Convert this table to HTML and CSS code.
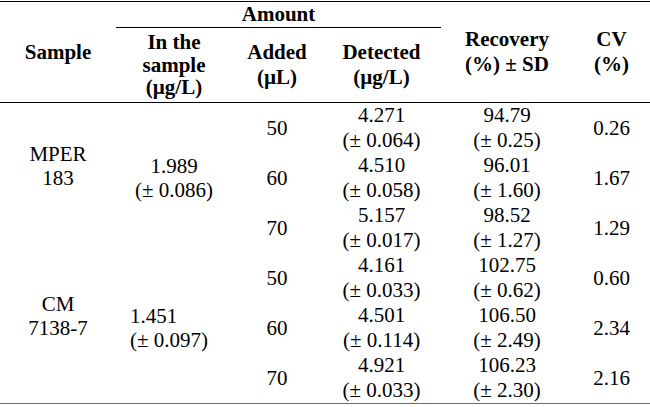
FILE: index.html
```html
<!DOCTYPE html>
<html>
<head>
<meta charset="utf-8">
<link rel="stylesheet" href="styles.css">
</head>
<body>
<table class="results">
  <colgroup>
    <col class="c-sample">
    <col class="c-insample">
    <col class="c-added">
    <col class="c-detected">
    <col class="c-recovery">
    <col class="c-cv">
  </colgroup>
  <thead>
    <tr class="head-top">
      <th rowspan="2" class="hb">Sample</th>
      <th colspan="3" class="amount">Amount</th>
      <th rowspan="2" class="hb">Recovery<br>(%) ± SD</th>
      <th rowspan="2" class="hb">CV<br>(%)</th>
    </tr>
    <tr class="head-sub">
      <th class="hb tight">In the<br>sample<br>(µg/L)</th>
      <th class="hb">Added<br>(µL)</th>
      <th class="hb">Detected<br>(µg/L)</th>
    </tr>
  </thead>
  <tbody>
    <tr>
      <td rowspan="3" class="sample">MPER<br>183</td>
      <td rowspan="3" class="base">1.989<br>(± 0.086)</td>
      <td>50</td>
      <td>4.271<br>(± 0.064)</td>
      <td>94.79<br>(± 0.25)</td>
      <td>0.26</td>
    </tr>
    <tr>
      <td>60</td>
      <td>4.510<br>(± 0.058)</td>
      <td>96.01<br>(± 1.60)</td>
      <td>1.67</td>
    </tr>
    <tr>
      <td>70</td>
      <td>5.157<br>(± 0.017)</td>
      <td>98.52<br>(± 1.27)</td>
      <td>1.29</td>
    </tr>
    <tr>
      <td rowspan="3" class="sample last">CM<br>7138-7</td>
      <td rowspan="3" class="base left last">1.451<br>(± 0.097)</td>
      <td>50</td>
      <td>4.161<br>(± 0.033)</td>
      <td>102.75<br>(± 0.62)</td>
      <td>0.60</td>
    </tr>
    <tr>
      <td>60</td>
      <td>4.501<br>(± 0.114)</td>
      <td>106.50<br>(± 2.49)</td>
      <td>2.34</td>
    </tr>
    <tr class="last-row">
      <td class="last">70</td>
      <td class="last">4.921<br>(± 0.033)</td>
      <td class="last">106.23<br>(± 2.30)</td>
      <td class="last">2.16</td>
    </tr>
  </tbody>
</table>
</body>
</html>
```

FILE: styles.css
```css
html, body {
  margin: 0;
  padding: 0;
  background: #ffffff;
}

.results {
  width: 650px;
  margin-top: 1px;
  border-collapse: separate;
  border-spacing: 0;
  table-layout: fixed;
  border-top: 1px solid #000;
  font-family: "Liberation Serif", "Times New Roman", serif;
  font-size: 21px;
  color: #000;
}

.c-sample { width: 116px; }
.c-insample { width: 116px; }
.c-added { width: 90px; }
.c-detected { width: 119px; }
.c-recovery { width: 132px; }
.c-cv { width: 77px; }

.results th,
.results td {
  padding: 0;
  text-align: center;
  vertical-align: middle;
  line-height: 25px;
}

.results th {
  font-weight: bold;
}

.head-top th.amount {
  height: 25px;
  border-bottom: 1px solid #000;
}

.head-sub th {
  height: 74px;
}

.results th.hb {
  border-bottom: 1px solid #000;
}

.results th.tight {
  line-height: 22.5px;
}

.results tbody td {
  height: 50px;
}

.results td.sample {
  line-height: 24px;
  padding-bottom: 24px;
}

.results td.base {
  line-height: 24px;
}

.results td.left {
  text-align: left;
  padding-left: 14px;
}

.results td.last {
  border-bottom: 1.5px solid #6b6b6b;
}
```
